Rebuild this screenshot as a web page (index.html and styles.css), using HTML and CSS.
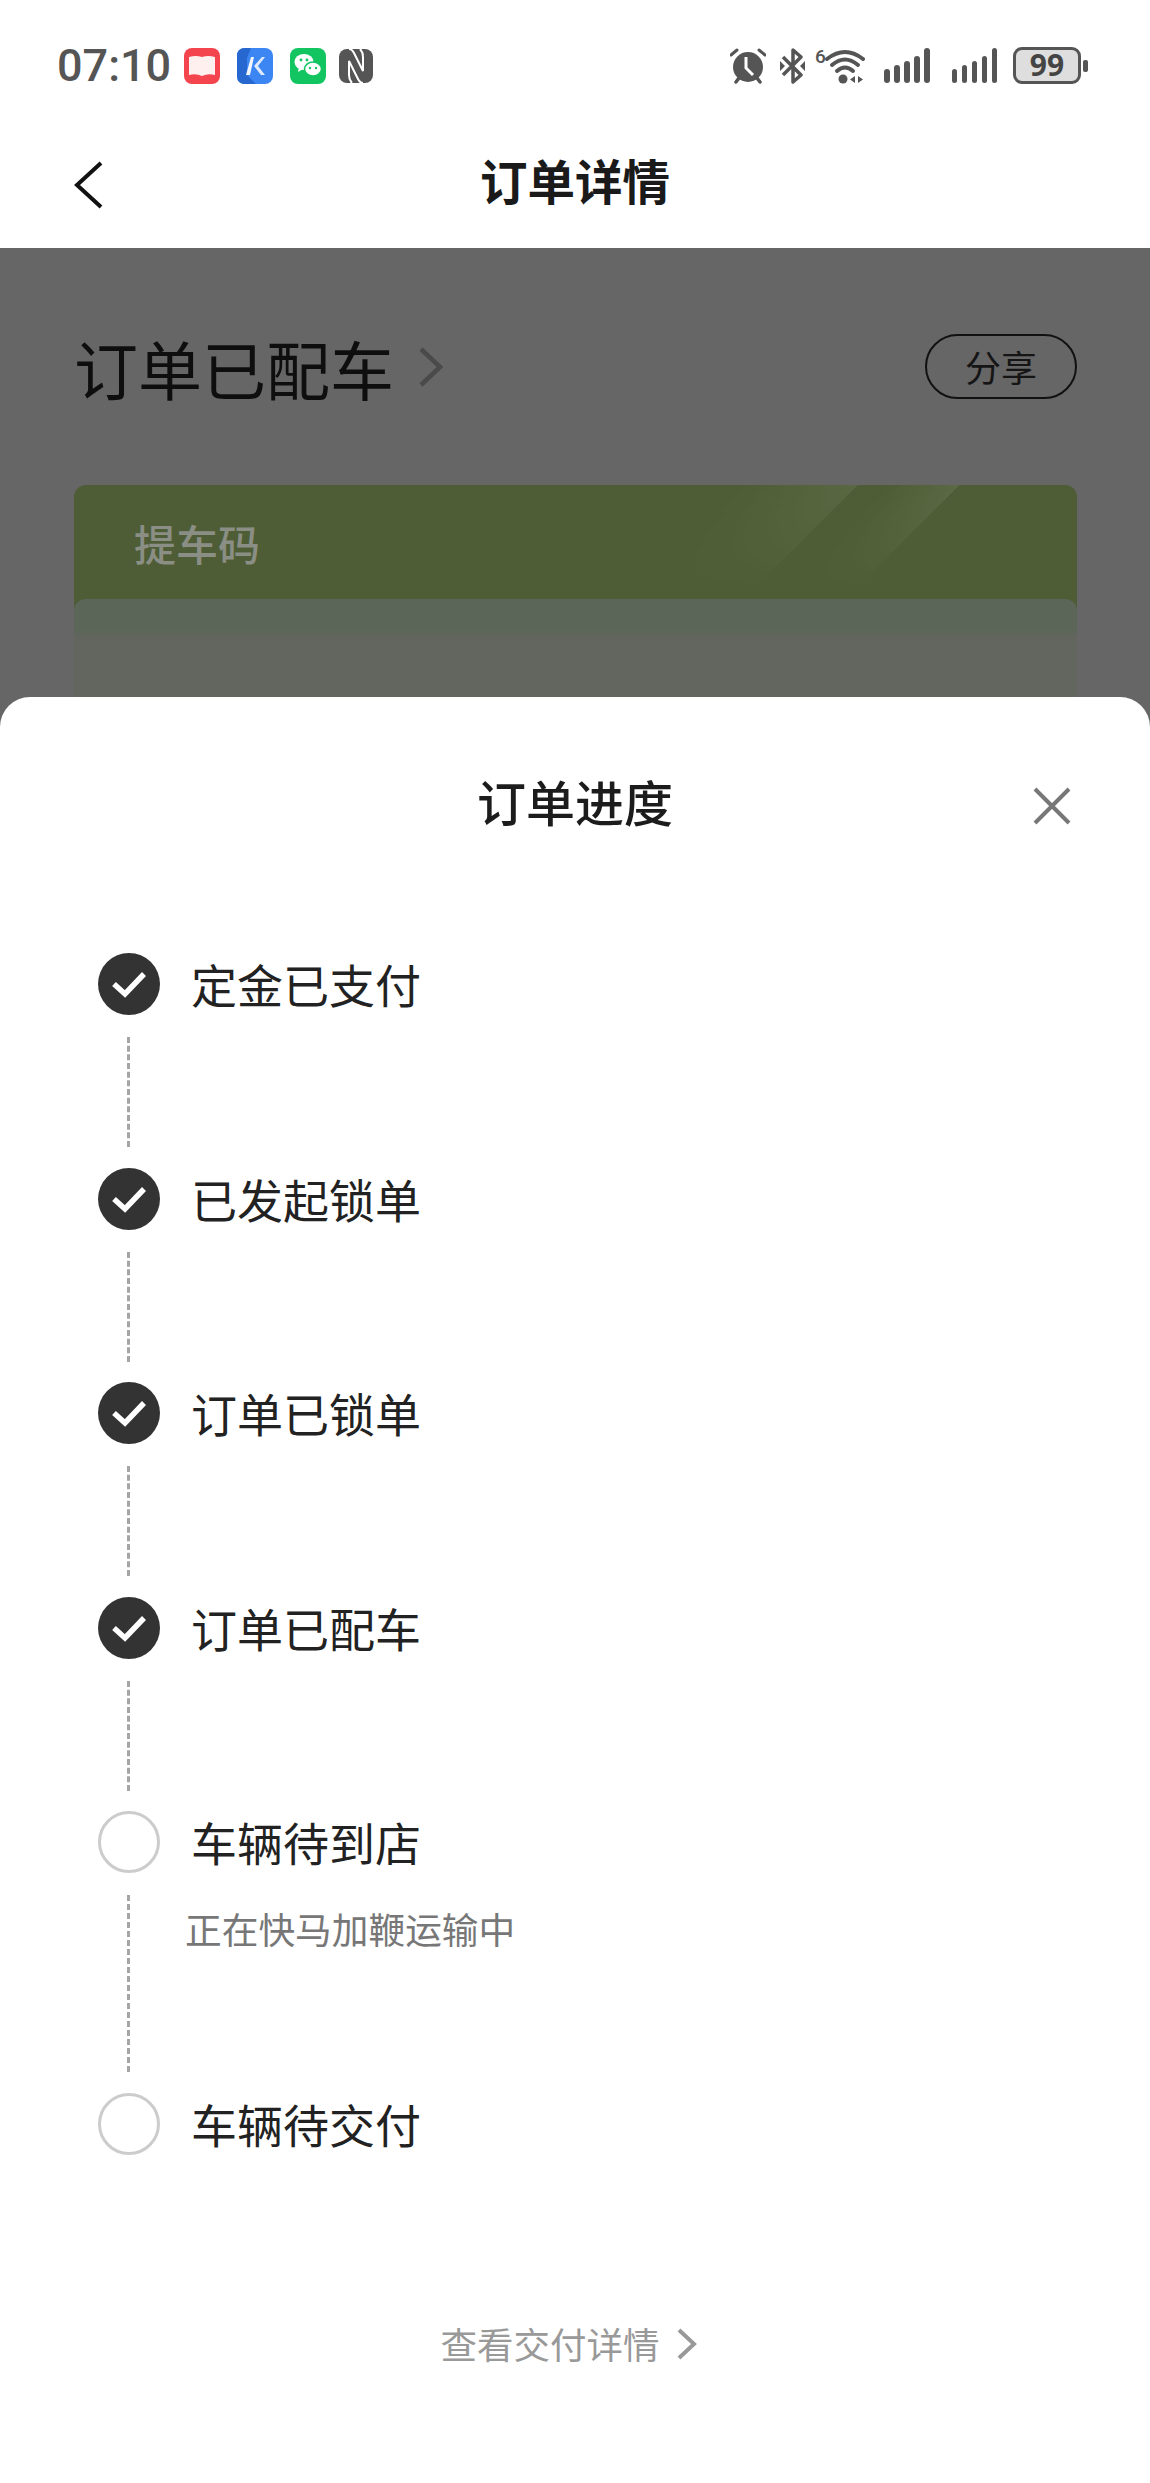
FILE: index.html
```html
<!DOCTYPE html>
<html lang="zh-CN">
<head>
    <meta charset="UTF-8">
    <meta name="viewport" content="width=device-width, initial-scale=1.0">
    <title>订单详情</title>
    <link rel="stylesheet" href="styles.css">
</head>
<body>
    <div class="page">
        <!-- Status bar -->
        <div class="status-bar">
            <div class="status-left">
                <span class="time">07:10</span>
                <svg class="app-icon" viewBox="0 0 36 36">
                    <rect width="36" height="36" rx="8" fill="#f4444e"/>
                    <path d="M5 9 Q12 7 18 9 Q24 7 31 9 V27 Q24 25 18 28 Q12 25 5 27 Z" fill="#fff0f0"/>
                </svg>
                <svg class="app-icon" viewBox="0 0 36 36">
                    <rect width="36" height="36" rx="8" fill="#3b86f2"/>
                    <path d="M0 8 Q0 0 8 0 H14 L10 10 V27 L19 36 H8 Q0 36 0 28 Z" fill="#2668d0"/>
                    <path d="M9 27 L14 9 H17 L13 27 Z" fill="#f2f7ff"/>
                    <path d="M17 18 L25 9 H28 L21 18 L28 27 H24 Z" fill="#dfeafc"/>
                </svg>
                <svg class="app-icon" viewBox="0 0 36 36">
                    <rect width="36" height="36" rx="8" fill="#12c561"/>
                    <ellipse cx="14" cy="14" rx="9.5" ry="8" fill="#fff"/>
                    <path d="M9 19 L8 24 L13 21 Z" fill="#fff"/>
                    <ellipse cx="23" cy="21" rx="8.5" ry="7" fill="#fff" stroke="#12c561" stroke-width="1.5"/>
                    <circle cx="11" cy="12" r="1.4" fill="#12c561"/>
                    <circle cx="17" cy="12" r="1.4" fill="#12c561"/>
                    <circle cx="20" cy="20" r="1.2" fill="#12c561"/>
                    <circle cx="26" cy="20" r="1.2" fill="#12c561"/>
                </svg>
                <svg class="nfc-icon" viewBox="0 0 34 34">
                    <rect width="34" height="34" rx="8" fill="#555"/>
                    <path d="M10 0 Q13 0 15 4 L24 22 V8 Q24 3 21 0" stroke="#fff" stroke-width="2" fill="none"/>
                    <path d="M24 34 Q21 34 19 30 L10 12 V26 Q10 31 13 34" stroke="#fff" stroke-width="2" fill="none"/>
                </svg>
            </div>
            <div class="status-right">
                <svg class="alarm-icon" viewBox="0 0 36 36">
                    <circle cx="18" cy="19" r="15" fill="#555"/>
                    <path d="M1 7 L7 2 M29 2 L35 7" stroke="#555" stroke-width="3" stroke-linecap="round"/>
                    <path d="M6 34 L9 30 M30 34 L27 30" stroke="#555" stroke-width="3.5" stroke-linecap="round"/>
                    <path d="M16 9 V20 L23 27" stroke="#fff" stroke-width="3" fill="none"/>
                </svg>
                <svg class="bt-icon" viewBox="0 0 25 36">
                    <path d="M3 9 L21 27 L13 34 V2 L21 9 L3 27" stroke="#555" stroke-width="3.5" fill="none" stroke-linejoin="round"/>
                    <path d="M0 13 L5 18 L0 23 Z M25 13 L20 18 L25 23 Z" fill="#555"/>
                </svg>
                <div class="wifi">
                    <span class="wifi-gen">6</span>
                    <svg class="wifi-icon" viewBox="0 0 40 36">
                        <path d="M2 11 Q20 -3 38 11" stroke="#555" stroke-width="4" fill="none" stroke-linecap="round"/>
                        <path d="M7 17 Q20 6 33 17" stroke="#555" stroke-width="4" fill="none" stroke-linecap="round"/>
                        <path d="M12 23 Q20 16 28 23" stroke="#555" stroke-width="4" fill="none" stroke-linecap="round"/>
                        <circle cx="18" cy="31" r="4.5" fill="#555"/>
                        <path d="M30 28 V35 L25 31.5 Z M33 28 V35 L38 31.5 Z" fill="#555"/>
                    </svg>
                </div>
                <div class="signal">
                    <span class="bar bar-1"></span>
                    <span class="bar bar-2"></span>
                    <span class="bar bar-3"></span>
                    <span class="bar bar-4"></span>
                    <span class="bar bar-5"></span>
                </div>
                <div class="signal">
                    <span class="bar bar-1"></span>
                    <span class="bar bar-2"></span>
                    <span class="bar bar-3"></span>
                    <span class="bar bar-4"></span>
                    <span class="bar bar-5"></span>
                </div>
                <div class="battery">
                    <span class="battery-body">99</span>
                    <span class="battery-cap"></span>
                </div>
            </div>
        </div>

        <!-- Title bar -->
        <div class="nav-bar">
            <svg class="back-icon" viewBox="0 0 30 48">
                <path d="M28 2 L4 24 L28 46" stroke="#111" stroke-width="4" fill="none"/>
            </svg>
            <h1>订单详情</h1>
        </div>

        <!-- Dimmed order page behind the sheet -->
        <div class="order-body">
            <div class="order-head">
                <div class="order-state">
                    <span>订单已配车</span>
                    <svg class="state-arrow" viewBox="0 0 26 42">
                        <path d="M3 3 L22 21 L3 39" stroke="#4a4a4a" stroke-width="4.5" fill="none"/>
                    </svg>
                </div>
                <div class="share-btn">分享</div>
            </div>
            <div class="code-card">
                <div class="code-title">提车码</div>
                <div class="code-panel"></div>
            </div>
        </div>

        <!-- Progress sheet -->
        <div class="sheet">
            <div class="sheet-head">
                <h2>订单进度</h2>
                <svg class="close-icon" viewBox="0 0 38 38">
                    <path d="M2 2 L36 36 M36 2 L2 36" stroke="#777" stroke-width="4"/>
                </svg>
            </div>
            <div class="steps">
                <div class="step">
                    <div class="rail">
                        <span class="dot done"><svg viewBox="0 0 62 62"><path d="M16 31 L27 41 L46 21" stroke="#fff" stroke-width="5.5" fill="none"/></svg></span>
                        <span class="connector"></span>
                    </div>
                    <div class="step-text"><div class="step-label">定金已支付</div></div>
                </div>
                <div class="step">
                    <div class="rail">
                        <span class="dot done"><svg viewBox="0 0 62 62"><path d="M16 31 L27 41 L46 21" stroke="#fff" stroke-width="5.5" fill="none"/></svg></span>
                        <span class="connector"></span>
                    </div>
                    <div class="step-text"><div class="step-label">已发起锁单</div></div>
                </div>
                <div class="step">
                    <div class="rail">
                        <span class="dot done"><svg viewBox="0 0 62 62"><path d="M16 31 L27 41 L46 21" stroke="#fff" stroke-width="5.5" fill="none"/></svg></span>
                        <span class="connector"></span>
                    </div>
                    <div class="step-text"><div class="step-label">订单已锁单</div></div>
                </div>
                <div class="step">
                    <div class="rail">
                        <span class="dot done"><svg viewBox="0 0 62 62"><path d="M16 31 L27 41 L46 21" stroke="#fff" stroke-width="5.5" fill="none"/></svg></span>
                        <span class="connector"></span>
                    </div>
                    <div class="step-text"><div class="step-label">订单已配车</div></div>
                </div>
                <div class="step">
                    <div class="rail">
                        <span class="dot"></span>
                        <span class="connector connector-long"></span>
                    </div>
                    <div class="step-text">
                        <div class="step-label">车辆待到店</div>
                        <div class="step-note">正在快马加鞭运输中</div>
                    </div>
                </div>
                <div class="step">
                    <div class="rail">
                        <span class="dot"></span>
                    </div>
                    <div class="step-text"><div class="step-label">车辆待交付</div></div>
                </div>
            </div>
            <div class="sheet-foot">
                <span>查看交付详情</span>
                <svg class="foot-arrow" viewBox="0 0 22 34">
                    <path d="M3 3 L18 17 L3 31" stroke="#999" stroke-width="4" fill="none"/>
                </svg>
            </div>
        </div>
    </div>
</body>
</html>
```

FILE: styles.css
```css
body {
    margin: 0;
    padding: 0;
    font-family: "Noto Sans CJK SC", "Noto Sans", sans-serif;
    background-color: #fff;
}

h1, h2 {
    margin: 0;
}

svg {
    display: block;
}

.page {
    position: relative;
    width: 1150px;
    height: 2483px;
    overflow: hidden;
    background-color: #fff;
}

/* Status bar */
.status-bar {
    height: 116px;
    box-sizing: border-box;
    padding: 47px 62px 0 57px;
    display: flex;
    justify-content: space-between;
    align-items: flex-start;
}

.status-left {
    display: flex;
    align-items: center;
    height: 37px;
}

.time {
    font-family: Roboto, sans-serif;
    font-weight: 500;
    font-size: 45px;
    line-height: 37px;
    color: #555;
    width: 127px;
}

.app-icon {
    width: 36px;
    height: 36px;
    margin-right: 17px;
}

.nfc-icon {
    width: 34px;
    height: 34px;
    margin-left: -4px;
}

.status-right {
    display: flex;
    align-items: center;
    height: 37px;
}

.alarm-icon {
    width: 36px;
    height: 36px;
    margin-right: 14px;
}

.bt-icon {
    width: 25px;
    height: 36px;
    margin-right: 10px;
}

.wifi {
    display: flex;
    align-items: flex-start;
    height: 36px;
    margin-right: 19px;
}

.wifi-gen {
    font-family: Roboto, sans-serif;
    font-weight: 500;
    font-size: 19px;
    line-height: 18px;
    color: #555;
    width: 10px;
}

.wifi-icon {
    width: 40px;
    height: 36px;
}

.signal {
    display: flex;
    align-items: flex-end;
    gap: 4.5px;
    height: 35px;
    margin-right: 22px;
}

.signal + .signal {
    margin-right: 16px;
}

.bar {
    width: 5.5px;
    border-radius: 3px;
    background-color: #555;
}

.bar-1 { height: 14px; }
.bar-2 { height: 18px; }
.bar-3 { height: 22px; }
.bar-4 { height: 27px; }
.bar-5 { height: 35px; }

.battery {
    display: flex;
    align-items: center;
    gap: 2px;
}

.battery-body {
    width: 68px;
    height: 37px;
    box-sizing: border-box;
    border: 3px solid #555;
    border-radius: 9px;
    background-color: #dedede;
    color: #444;
    font-family: "Open Sans", sans-serif;
    font-weight: 700;
    font-size: 30px;
    line-height: 30px;
    text-align: center;
}

.battery-cap {
    width: 5px;
    height: 12px;
    border-radius: 2px;
    background-color: #555;
}

/* Title bar */
.nav-bar {
    height: 132px;
    padding-left: 73px;
    display: flex;
    align-items: center;
    position: relative;
    background-color: #fff;
}

.back-icon {
    width: 30px;
    height: 48px;
    margin-top: 6px;
}

.nav-bar h1 {
    position: absolute;
    left: 0;
    right: 0;
    padding-bottom: 6px;
    text-align: center;
    font-size: 47.5px;
    font-weight: 700;
    color: #1a1a1a;
}

/* Dimmed page */
.order-body {
    height: 2235px;
    box-sizing: border-box;
    padding: 86px 73px 0 74px;
    background-color: #666;
}

.order-head {
    display: flex;
    justify-content: space-between;
    align-items: center;
    height: 65px;
}

.order-state {
    display: flex;
    align-items: center;
    gap: 24px;
    font-size: 64px;
    color: #0e0e0e;
}

.state-arrow {
    width: 26px;
    height: 42px;
}

.share-btn {
    width: 152px;
    height: 65px;
    box-sizing: border-box;
    border: 2px solid #111;
    border-radius: 33px;
    text-align: center;
    font-size: 36px;
    line-height: 60px;
    color: #151515;
}

.code-card {
    margin-top: 86px;
    height: 400px;
    border-radius: 12px;
    background-color: #4e5d35;
    overflow: hidden;
}

.code-title {
    position: relative;
    height: 114px;
    box-sizing: border-box;
    padding-left: 60px;
    font-size: 42px;
    font-weight: 500;
    line-height: 116px;
    color: #8a8e84;
}

/* light bands across the top of the card, fading out downwards */
.code-title::before {
    content: "";
    position: absolute;
    top: 0;
    left: 0;
    right: 0;
    bottom: 0;
    background:
        linear-gradient(135deg, transparent 470px, rgba(255, 255, 255, 0.07) 554px, transparent 554.5px),
        linear-gradient(135deg, transparent 575px, rgba(255, 255, 255, 0.08) 626px, transparent 626.5px);
    background-size: 1003px 400px;
    -webkit-mask-image: linear-gradient(#000, transparent 95%);
    mask-image: linear-gradient(#000, transparent 95%);
}

.code-panel {
    height: 286px;
    border-radius: 12px;
    background: linear-gradient(#5b6659, #5c6658 30px, #63655f 40px);
}

/* Progress sheet */
.sheet {
    position: absolute;
    top: 697px;
    left: 0;
    right: 0;
    bottom: 0;
    background-color: #fff;
    border-radius: 30px 30px 0 0;
}

.sheet-head {
    height: 212px;
    display: flex;
    justify-content: center;
    align-items: center;
    position: relative;
}

.sheet-head h2 {
    padding-bottom: 6px;
    font-size: 49px;
    font-weight: 500;
    color: #1c1c1c;
}

.close-icon {
    position: absolute;
    right: 79px;
    top: 90px;
    width: 38px;
    height: 38px;
}

.steps {
    padding: 44px 0 0 98px;
}

.step {
    display: flex;
    gap: 31px;
}

.rail {
    width: 62px;
    display: flex;
    flex-direction: column;
    align-items: center;
}

.dot {
    width: 62px;
    height: 62px;
    box-sizing: border-box;
    border: 3px solid #ccc;
    border-radius: 50%;
    flex-shrink: 0;
}

.dot.done {
    border: none;
    background-color: #333;
}

.connector {
    height: 110px;
    margin: 22px 2px 20.6px 0;
    border-left: 3px dashed #a5a5a5;
}

.connector-long {
    height: 177px;
}

.step-label {
    font-size: 46px;
    line-height: 60px;
    color: #222;
}

.step-note {
    margin: 32px 0 0 -6px;
    font-size: 36.7px;
    line-height: 50px;
    color: #777;
}

.sheet-foot {
    margin-top: 164px;
    padding-right: 12px;
    display: flex;
    justify-content: center;
    align-items: center;
    gap: 16px;
    font-size: 36.5px;
    line-height: 50px;
    color: #999;
}

.foot-arrow {
    width: 22px;
    height: 34px;
}
```
